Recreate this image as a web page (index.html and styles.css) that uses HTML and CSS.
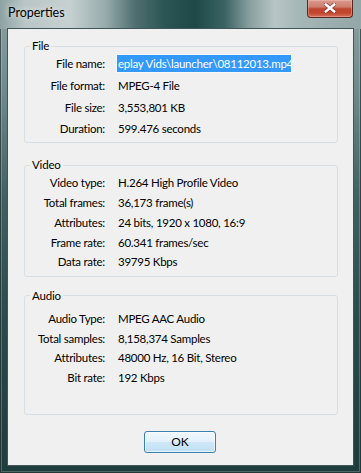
FILE: index.html
```html
<!DOCTYPE html>
<html>
<head>
<meta charset="utf-8">
<link rel="stylesheet" href="styles.css">
</head>
<body>
<div class="window">
  <div class="titlebar">
    <span class="title">Properties</span>
    <button class="close" aria-label="Close">
      <svg width="12" height="10" viewBox="0 0 12 10">
        <path d="M1.5 1.2 L10.5 8.8 M10.5 1.2 L1.5 8.8" stroke="#5a1e14" stroke-width="4" stroke-linecap="round" opacity="0.55"/>
        <path d="M1.8 1.5 L10.2 8.5 M10.2 1.5 L1.8 8.5" stroke="#ffffff" stroke-width="2.4" stroke-linecap="square"/>
      </svg>
    </button>
  </div>
  <div class="client">
    <fieldset class="group group-file">
      <legend>File</legend>
      <div class="row row-name"><span class="label">File name:</span><span class="edit"><span class="sel">eplay Vids\launcher\08112013.mp4</span></span></div>
      <div class="row row-22"><span class="label">File format:</span><span class="value">MPEG-4 File</span></div>
      <div class="row row-22"><span class="label">File size:</span><span class="value">3,553,801 KB</span></div>
      <div class="row row-21"><span class="label">Duration:</span><span class="value">599.476 seconds</span></div>
    </fieldset>
    <fieldset class="group group-video">
      <legend>Video</legend>
      <div class="row row-v"><span class="label">Video type:</span><span class="value">H.264 High Profile Video</span></div>
      <div class="row row-v"><span class="label">Total frames:</span><span class="value">36,173 frame(s)</span></div>
      <div class="row row-v"><span class="label">Attributes:</span><span class="value">24 bits, 1920 x 1080, 16:9</span></div>
      <div class="row row-v"><span class="label">Frame rate:</span><span class="value">60.341 frames/sec</span></div>
      <div class="row row-v"><span class="label">Data rate:</span><span class="value">39795 Kbps</span></div>
    </fieldset>
    <fieldset class="group group-audio">
      <legend>Audio</legend>
      <div class="row row-a"><span class="label">Audio Type:</span><span class="value">MPEG AAC Audio</span></div>
      <div class="row row-a"><span class="label">Total samples:</span><span class="value">8,158,374 Samples</span></div>
      <div class="row row-a"><span class="label">Attributes:</span><span class="value">48000 Hz, 16 Bit, Stereo</span></div>
      <div class="row row-a"><span class="label">Bit rate:</span><span class="value">192 Kbps</span></div>
    </fieldset>
    <div class="buttons">
      <button class="ok">OK</button>
    </div>
  </div>
</div>
</body>
</html>
```

FILE: styles.css
```css
html, body {
  margin: 0;
  padding: 0;
}
body {
  width: 361px;
  height: 473px;
  overflow: hidden;
  font-family: "Liberation Sans", Arial, sans-serif;
}
.window {
  width: 361px;
  height: 473px;
  box-sizing: border-box;
  display: flex;
  flex-direction: column;
  padding: 0 8px 8px 8px;
  background: linear-gradient(to bottom, #8ea3a4 0px, #6f8a8b 90px, #3f5f60 200px, #2a4a4b 320px, #1f3c3d 473px);
  box-shadow: inset 0 0 0 1px rgba(10, 25, 25, 0.6), inset 0 0 0 2px rgba(220, 235, 235, 0.25);
}
.titlebar {
  height: 29px;
  flex: none;
  margin: 0 -8px;
  padding: 0 8px;
  display: flex;
  justify-content: space-between;
  align-items: flex-start;
  background: linear-gradient(to right, #8da2a3 0px, #b9c6c6 25px, #c6d0d0 70px, #98acad 105px, #4f6f70 135px, #2b5454 165px, #1e4949 195px, #3c6364 225px, #8aa0a0 250px, #b7c5c5 275px, #a5b6b6 300px, #92a7a7 361px);
}
.title {
  padding-top: 6px;
  font-family: Lato, "Liberation Sans", Arial, sans-serif;
  font-size: 12.5px;
  line-height: 14px;
  color: #000;
  text-shadow: 0 0 6px rgba(255, 255, 255, 0.9);
}
.close {
  width: 46px;
  height: 18px;
  margin: 0;
  padding: 0;
  border: 1px solid #5a261d;
  border-top: none;
  border-radius: 0 0 4px 4px;
  background: linear-gradient(to bottom, #d99a8d 0%, #cf7e6f 40%, #bd4631 52%, #c2442d 75%, #d6715d 100%);
  box-shadow: inset 0 0 0 1px rgba(255, 210, 200, 0.35);
  display: flex;
  align-items: center;
  justify-content: center;
}
.close svg {
  display: block;
  margin-top: -1px;
}
.client {
  flex: 1;
  display: flex;
  flex-direction: column;
  background: #f0f0f0;
  box-shadow: 0 0 0 1px #3e5657;
  padding-top: 11px;
}
.group {
  margin: 0 15px 0 16px;
  padding: 0 0 3px 0;
  min-width: 0;
  border: 1px solid #d5dfe5;
  border-radius: 3px;
}
.group legend {
  margin-left: 5px;
  padding: 0 2px;
  font-family: Lato, "Liberation Sans", Arial, sans-serif;
  font-size: 11.5px;
  letter-spacing: -0.2px;
  line-height: 12px;
  color: #000;
}
.group-video {
  margin-top: 16px;
  padding: 2px 0 4px 0;
}
.group-audio {
  margin-top: 13px;
  padding: 7px 0 27px 0;
}
.row {
  display: grid;
  grid-template-columns: 80px 1fr;
  column-gap: 13px;
  align-items: center;
  font-family: Lato, "Liberation Sans", Arial, sans-serif;
  font-size: 11.5px;
  letter-spacing: -0.25px;
  color: #000;
}
.row-name { height: 22px; }
.row-22 { height: 22px; }
.row-21 { height: 21px; }
.row-v { height: 19.75px; }
.row-a { height: 19.5px; }
.label {
  text-align: right;
  white-space: nowrap;
}
.value {
  white-space: nowrap;
}
.edit {
  margin-left: -2px;
  width: 176px;
  height: 19px;
  box-sizing: border-box;
  border: 1px solid #f4f8fb;
  display: flex;
  align-items: stretch;
  overflow: hidden;
  background: #ffffff;
}
.sel {
  flex: 1;
  white-space: nowrap;
  background: #3399ff;
  color: #ffffff;
  line-height: 17px;
  padding-left: 1px;
}
.buttons {
  display: flex;
  justify-content: center;
  margin-top: 16px;
}
.ok {
  width: 72px;
  height: 22px;
  margin: 0 0 0 -1px;
  padding: 0;
  border: 1px solid #3c7fb1;
  border-radius: 3px;
  background: linear-gradient(to bottom, #f0f8fd 0%, #e3f1fb 48%, #cfe7f7 52%, #bfe0f5 100%);
  box-shadow: inset 0 0 0 1px rgba(255, 255, 255, 0.6);
  font-family: Lato, "Liberation Sans", Arial, sans-serif;
  font-size: 12px;
  color: #000;
}
```
